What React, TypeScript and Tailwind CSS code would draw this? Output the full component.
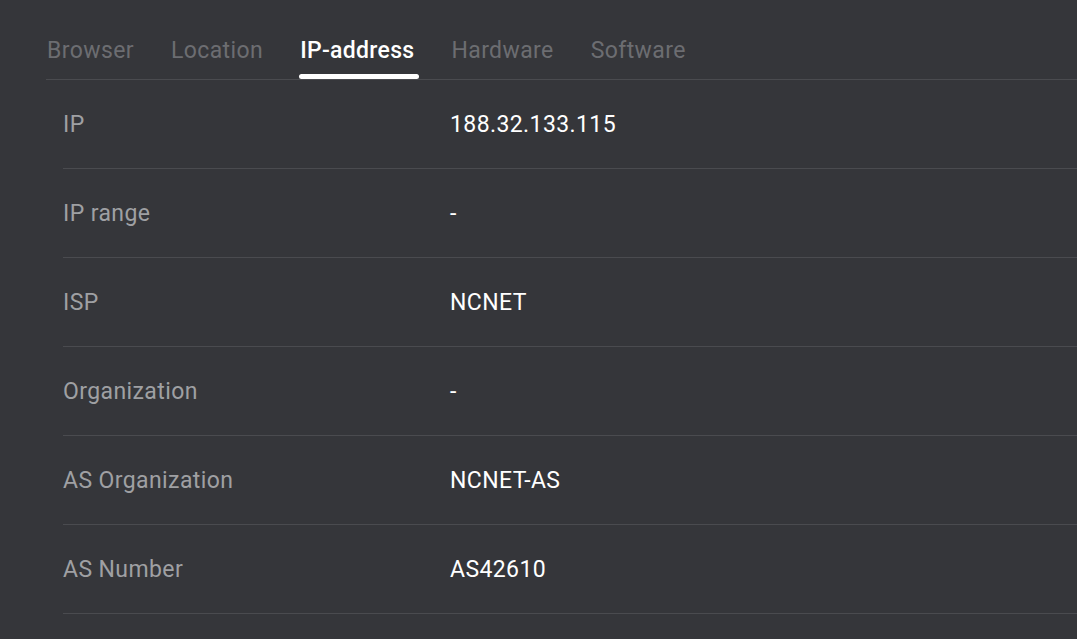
const tabs = ["Browser", "Location", "IP-address", "Hardware", "Software"];

const rows = [
  { label: "IP", value: "188.32.133.115" },
  { label: "IP range", value: "-" },
  { label: "ISP", value: "NCNET" },
  { label: "Organization", value: "-" },
  { label: "AS Organization", value: "NCNET-AS" },
  { label: "AS Number", value: "AS42610" },
];

export default function App() {
  const active = "IP-address";
  return (
    <div
      className="w-[1077px] h-[639px] overflow-hidden bg-[#35363a] pt-[33px] pl-[46px]"
      style={{ fontFamily: "Roboto, 'Liberation Sans', sans-serif" }}
    >
      <div className="flex gap-[37px] border-b border-[#4a4b4f] pl-[1px]">
        {tabs.map((t) => (
          <div
            key={t}
            className={
              t === active
                ? "relative pb-[11px] text-[23px] leading-[35px] font-medium tracking-[0.3px] text-white"
                : "relative pb-[11px] text-[23px] leading-[35px] tracking-[0.4px] text-[#6c6d71]"
            }
          >
            {t}
            {t === active && (
              <div className="absolute left-[-1px] right-[-5px] bottom-[0px] h-[5px] rounded-sm bg-white" />
            )}
          </div>
        ))}
      </div>
      <div className="pl-[17px]">
        {rows.map((r) => (
          <div
            key={r.label}
            className="flex items-center h-[89px] border-b border-[#4a4b4f] pt-[2px] text-[23px] tracking-[0.4px]"
          >
            <div className="w-[387px] text-[#9fa0a3]">{r.label}</div>
            <div className="text-white">{r.value}</div>
          </div>
        ))}
      </div>
    </div>
  );
}
